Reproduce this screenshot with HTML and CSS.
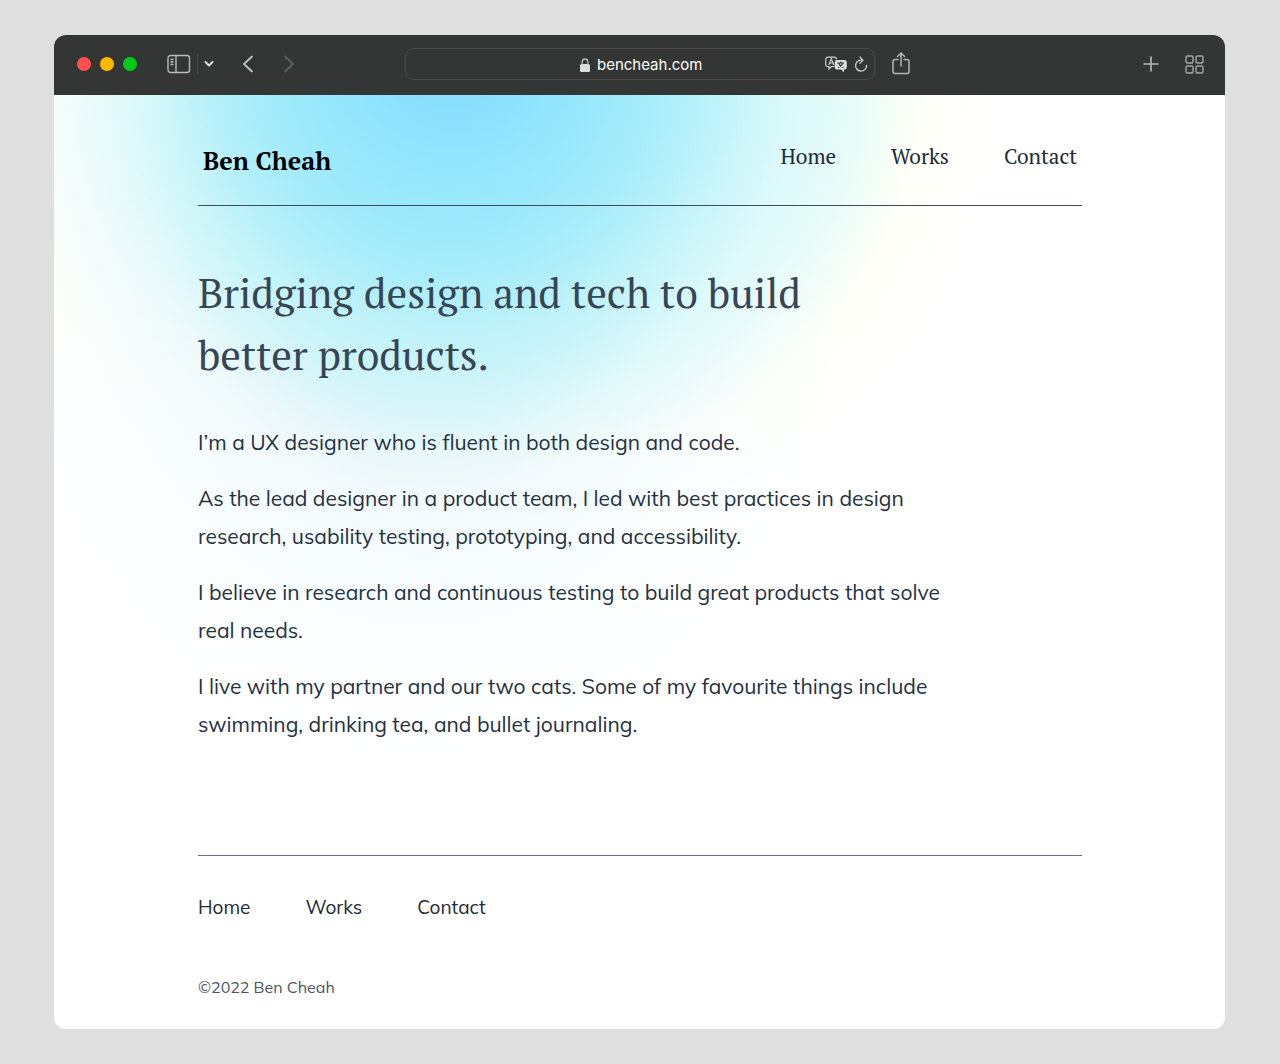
FILE: index.html
```html
<!DOCTYPE html>
<html lang="en">
<head>
<meta charset="utf-8">
<meta name="viewport" content="width=device-width, initial-scale=1">
<title>Ben Cheah</title>
<link rel="stylesheet" href="styles.css">
</head>
<body>
<div class="window">
  <div class="toolbar">
    <div class="tools tools-left">
      <div class="lights">
        <button class="light light-close" aria-label="Close"></button>
        <button class="light light-minimise" aria-label="Minimise"></button>
        <button class="light light-zoom" aria-label="Zoom"></button>
      </div>
      <div class="sidebar-tools">
        <button class="tool" aria-label="Sidebar"><svg width="24" height="20" viewBox="0 0 24 20" fill="none" stroke="#b9b9b9" stroke-width="1.4"><rect x="1" y="1.5" width="21.5" height="17" rx="2.5"/><path d="M9 1.500V18.500M3.500 5.500H6.500M3.500 8H6.500M3.500 10.500H6.500"/></svg></button>
        <span class="divider"></span>
        <button class="tool" aria-label="Tab groups"><svg width="10" height="8" viewBox="0 0 10 8" fill="none" stroke="#e2e2e2" stroke-width="2" stroke-linecap="round" stroke-linejoin="round"><path d="M1.500 2L5 5.500L8.500 2"/></svg></button>
      </div>
      <div class="history">
        <button class="tool" aria-label="Back"><svg width="12" height="18" viewBox="0 0 12 18" fill="none" stroke="#c4c4c4" stroke-width="1.800" stroke-linecap="round" stroke-linejoin="round"><path d="M10 1.500L2 9L10 16.500"/></svg></button>
        <button class="tool" aria-label="Forward"><svg width="12" height="18" viewBox="0 0 12 18" fill="none" stroke="#5e5f5f" stroke-width="1.800" stroke-linecap="round" stroke-linejoin="round"><path d="M2 1.500L10 9L2 16.500"/></svg></button>
      </div>
    </div>
    <div class="address">
      <span class="address-side"></span>
      <div class="address-main">
        <svg width="10" height="14" viewBox="0 0 10 14"><rect y="6" width="10" height="8" rx="1.500" fill="#dcdcdc"/><path d="M2.200 6.500V3.800a2.800 2.800 0 0 1 5.600 0V6.500" fill="none" stroke="#bdbdbd" stroke-width="1.300"/></svg>
        <input class="address-input" type="text" value="bencheah.com" aria-label="Address">
      </div>
      <div class="address-side address-actions">
        <button class="tool" aria-label="Translate"><svg width="22" height="17" viewBox="0 0 22 17"><path d="M9.500 10.500H6.500L4 13V10.500H3A2.300 2.300 0 0 1 .700 8.200V3.500A2.300 2.300 0 0 1 3 1.200H9.200A2.300 2.300 0 0 1 11.500 3.300" fill="none" stroke="#cfcfcf" stroke-width="1.200"/><path d="M3.800 9L6.300 2.800L8.800 9M4.700 7H8" fill="none" stroke="#cfcfcf" stroke-width="1.200"/><path d="M12 4H19.500A2.300 2.300 0 0 1 21.800 6.300V11.200A2.300 2.300 0 0 1 19.500 13.500H19V16.300L16 13.500H12A2.300 2.300 0 0 1 9.700 11.200V6.300A2.300 2.300 0 0 1 12 4Z" fill="#dedede"/><path d="M12.300 7H19M15.700 5.500V7M13.500 7Q15 10.500 18.500 11.800M18 7Q16.500 10.500 13 11.800" fill="none" stroke="#343635" stroke-width="1.100"/></svg></button>
        <button class="tool" aria-label="Reload"><svg width="14" height="17" viewBox="0 0 14 17" fill="none" stroke="#cfcfcf" stroke-width="1.300" stroke-linecap="round" stroke-linejoin="round"><path d="M8.500 4.300A5.500 5.500 0 1 0 12.600 9.500M6 1L9 4.400L5.800 7.400"/></svg></button>
      </div>
    </div>
    <div class="tools tools-right">
      <button class="tool" aria-label="Share"><svg width="18" height="24" viewBox="0 0 18 24" fill="none" stroke="#b4b4b4" stroke-width="1.500" stroke-linecap="round" stroke-linejoin="round"><path d="M6 7.500H3A2 2 0 0 0 1 9.500V19.500A2 2 0 0 0 3 21.500H15A2 2 0 0 0 17 19.500V9.500A2 2 0 0 0 15 7.500H12M9 14V1.500M5.500 4.500L9 1L12.500 4.500"/></svg></button>
      <div class="tab-tools">
        <button class="tool" aria-label="New tab"><svg width="16" height="16" viewBox="0 0 16 16" fill="none" stroke="#b9b9b9" stroke-width="1.600" stroke-linecap="round"><path d="M8 1V15M1 8H15"/></svg></button>
        <button class="tool" aria-label="Tab overview"><svg width="19" height="19" viewBox="0 0 19 19" fill="none" stroke="#a6a6a6" stroke-width="1.400"><rect x="1" y="1" width="7" height="7" rx="1.500"/><rect x="11" y="1" width="7" height="7" rx="1.500"/><rect x="1" y="11" width="7" height="7" rx="1.500"/><rect x="11" y="11" width="7" height="7" rx="1.500"/></svg></button>
      </div>
    </div>
  </div>
  <div class="page">
    <div class="container">
      <header class="site-header">
        <a class="brand" href="#">Ben Cheah</a>
        <nav class="links header-links" aria-label="Main">
          <a href="#">Home</a>
          <a href="#">Works</a>
          <a href="#">Contact</a>
        </nav>
      </header>
      <main class="intro">
        <h1>Bridging design and tech to build<br>better products.</h1>
        <p>I’m a UX designer who is fluent in both design and code.</p>
        <p>As the lead designer in a product team, I led with best practices in design<br>research, usability testing, prototyping, and accessibility.</p>
        <p>I believe in research and continuous testing to build great products that solve<br>real needs.</p>
        <p>I live with my partner and our two cats. Some of my favourite things include<br>swimming, drinking tea, and bullet journaling.</p>
      </main>
      <footer class="site-footer">
        <nav class="links footer-links" aria-label="Footer">
          <a href="#">Home</a>
          <a href="#">Works</a>
          <a href="#">Contact</a>
        </nav>
        <small class="copyright">©2022 Ben Cheah</small>
      </footer>
    </div>
  </div>
</div>
</body>
</html>
```
FILE: styles.css
```css
* { box-sizing: border-box; }

body {
  margin: 0;
  padding: 35px 55px 35px 54px;
  background: #dfdfdf;
  color: #243040;
  font-family: Mulish, Lato, "Open Sans", sans-serif;
}

a { color: inherit; text-decoration: none; }

button { padding: 0; border: 0; background: none; }

svg { display: block; }

.window {
  border-radius: 12px;
  overflow: hidden;
  background: #fff;
}

/* Browser toolbar */
.toolbar {
  display: grid;
  grid-template-columns: 1fr 470px 1fr;
  align-items: center;
  height: 60px;
  padding-bottom: 2px;
  background: #343635;
}

.tools { display: flex; align-items: center; }

.tools-left { padding-left: 23px; }

.tools-right { justify-content: space-between; padding: 0 21px 0 17px; }

.lights { display: flex; gap: 9px; }

.light { width: 14px; height: 14px; border-radius: 50%; }
.light-close { background: #ff504f; }
.light-minimise { background: #ffb800; }
.light-zoom { background: #00cc17; }

.sidebar-tools { display: flex; align-items: center; gap: 6px; margin-left: 30px; }

.divider { width: 1px; height: 20px; background: #444645; }

.history { display: flex; gap: 29px; margin-left: 28px; }

.tab-tools { display: flex; align-items: center; gap: 26px; }

.address {
  display: grid;
  grid-template-columns: 1fr auto 1fr;
  align-items: center;
  height: 32px;
  padding: 1px 6px 0 10px;
  border: 1px solid #4b494b;
  border-radius: 8px;
}

.address-main { display: flex; align-items: center; gap: 7px; }

.address-input {
  width: 106px;
  padding: 0;
  border: 0;
  outline: 0;
  background: none;
  color: #fff;
  font: 15px Inter, sans-serif;
}

.address-actions { display: flex; justify-content: flex-end; align-items: center; gap: 7px; }

/* Web page */
.page {
  padding: 0 143px 30px 144px;
  background:
    radial-gradient(ellipse 300px 300px at 400px -60px, rgba(125, 208, 255, 0.65), rgba(130, 218, 255, 0.3) 50%, rgba(130, 225, 255, 0)),
    radial-gradient(ellipse 340px 360px at 390px -20px, rgba(135, 232, 252, 0.7), rgba(145, 236, 250, 0.6) 40%, rgba(160, 240, 248, 0.3) 72%, rgba(200, 248, 248, 0)),
    radial-gradient(ellipse 440px 400px at 440px -30px, rgba(165, 238, 252, 0.75), rgba(180, 242, 250, 0.6) 50%, rgba(205, 250, 248, 0.4) 80%, rgba(240, 254, 246, 0)),
    radial-gradient(ellipse 460px 660px at 370px 0, rgba(200, 236, 250, 0.9), rgba(214, 240, 250, 0.75) 45%, rgba(234, 247, 255, 0.6) 62%, rgba(244, 252, 255, 0.5) 82%, rgba(255, 255, 255, 0)),
    radial-gradient(ellipse 540px 460px at 400px 0, #eefbf8, #f3fdf6 68%, #fffff7 84%, #fff);
}

.container { max-width: 884px; margin: 0 auto; }

.site-header {
  display: flex;
  justify-content: space-between;
  height: 111px;
  padding: 44px 5px 0;
  border-bottom: 1px solid #3f4a5a;
  font-family: "PT Serif", "Liberation Serif", serif;
}

.brand { color: #000; font-size: 25px; font-weight: 700; line-height: 44px; }

.links { display: flex; gap: 55px; }

.header-links { color: #1f2937; font-size: 21px; line-height: 34px; }

.intro { padding: 56px 0 94px; }

h1 {
  margin: 0 0 37px;
  color: #374557;
  font: 400 41px/62px "PT Serif", "Liberation Serif", serif;
}

p { margin: 0 0 18px; font-size: 21px; line-height: 38px; }

.site-footer { border-top: 1px solid #667180; padding-top: 35px; }

.footer-links { color: #1f2937; font-size: 19px; line-height: 32px; }

.copyright {
  display: block;
  margin-top: 52px;
  color: #4b5563;
  font-size: 16px;
  line-height: 24px;
}
```
